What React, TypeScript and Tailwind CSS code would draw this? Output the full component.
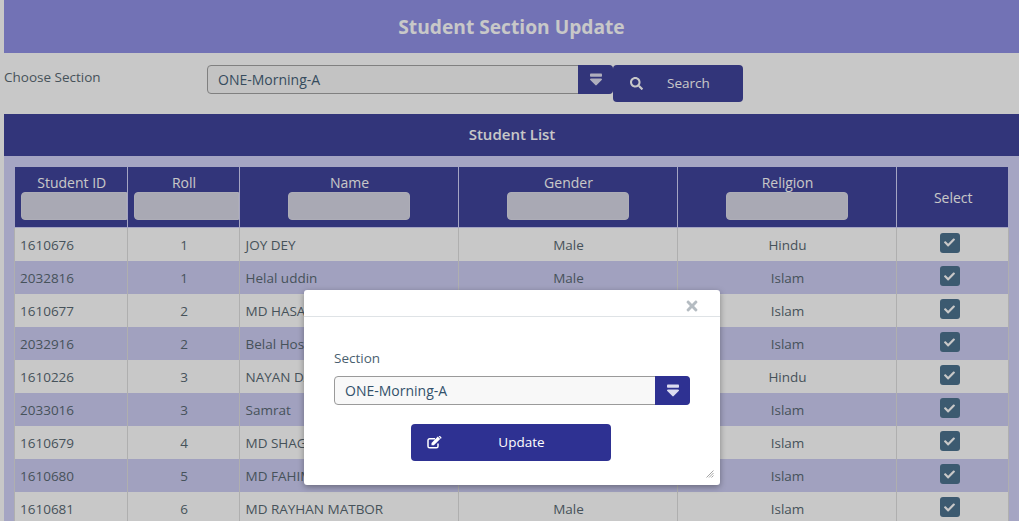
import React from "react";
import { FaCheck, FaSearch, FaTimes } from "react-icons/fa";

const students = [
  { id: "1610676", roll: 1, name: "JOY DEY", gender: "Male", religion: "Hindu" },
  { id: "2032816", roll: 1, name: "Helal uddin", gender: "Male", religion: "Islam" },
  { id: "1610677", roll: 2, name: "MD HASAN", gender: "Male", religion: "Islam" },
  { id: "2032916", roll: 2, name: "Belal Hossain", gender: "Male", religion: "Islam" },
  { id: "1610226", roll: 3, name: "NAYAN DAS", gender: "Male", religion: "Hindu" },
  { id: "2033016", roll: 3, name: "Samrat", gender: "Male", religion: "Islam" },
  { id: "1610679", roll: 4, name: "MD SHAGOR", gender: "Male", religion: "Islam" },
  { id: "1610680", roll: 5, name: "MD FAHIM", gender: "Male", religion: "Islam" },
  { id: "1610681", roll: 6, name: "MD RAYHAN MATBOR", gender: "Male", religion: "Islam" },
];

const SelectArrow = () => (
  <svg width="14" height="13" viewBox="0 0 14 13" fill="currentColor">
    <rect x="1" y="0.5" width="12" height="3.2" rx="0.8" />
    <path d="M2 5.4h10a1 1 0 0 1 .7 1.7l-5 5a1 1 0 0 1-1.4 0l-5-5A1 1 0 0 1 2 5.4z" />
  </svg>
);

const EditIcon = () => (
  <svg width="15" height="13" viewBox="0 0 15 13" fill="none">
    <path d="M11 7.5V10.2a1.6 1.6 0 0 1-1.6 1.6H2.6A1.6 1.6 0 0 1 1 10.2V4.4a1.6 1.6 0 0 1 1.6-1.6H8" stroke="currentColor" strokeWidth="1.5" />
    <path d="M4.5 9.2V6.9L10.8.6l2.4 2.4-6.3 6.2z" fill="currentColor" />
    <path d="M11.6 0l.3-.1a.8.8 0 0 1 1 0l1.4 1.4a.8.8 0 0 1 0 1l-.5.6z" fill="currentColor" />
  </svg>
);

const ResizeHandle = () => (
  <svg width="8" height="8" viewBox="0 0 8 8" stroke="#a4a4a4" strokeWidth="1">
    <path d="M0.5 7.5l7-7M3 7.5l4.5-4.5M5.5 7.5l2-2" />
  </svg>
);

const App: React.FC = () => {
  return (
    <div className="relative h-[521px] overflow-hidden bg-white pl-1 font-['Open_Sans',sans-serif] text-[13.5px] text-[#4a5a66]">
      <div className="flex h-[53px] items-center justify-center bg-[#8787e5] pt-[2px] text-[19.2px] font-bold text-white">
        Student Section Update
      </div>

      <div className="flex h-[61px]">
        <label className="mt-[15px] w-[203px] leading-[18px]">Choose Section</label>
        <div className="mt-3 flex h-[29px] w-[406px] rounded border border-[#9a9a9a] bg-[#f8f8f8] pl-[10px]">
          <span className="flex-1 text-sm leading-[27px] text-[#33516b]">ONE-Morning-A</span>
          <span className="-my-px -mr-px flex w-[35px] items-center justify-center rounded-r bg-[#2e3192] text-[#dcdcf0]">
            <SelectArrow />
          </span>
        </div>
        <button className="mt-3 flex h-[37px] w-[130px] items-center rounded bg-[#2e3192] pl-[17px] text-white">
          <FaSearch className="text-[13px]" />
          <span className="ml-[24px]">Search</span>
        </button>
      </div>

      <div className="flex h-[42px] items-center justify-center bg-[#2e3192] pb-[2px] pl-[1px] text-[15px] font-semibold text-white">
        Student List
      </div>

      <div className="h-[400px] bg-[#cfcff9] pl-[10px] pr-[10px] pt-[11px]">
        <table className="w-full table-fixed border-collapse">
          <colgroup>
            <col className="w-[112.5px]" />
            <col className="w-[112px]" />
            <col className="w-[219px]" />
            <col className="w-[219px]" />
            <col className="w-[219px]" />
            <col />
          </colgroup>
          <thead>
            <tr className="h-[60px] bg-[#2e3192] font-normal text-white">
              {["Student ID", "Roll", "Name", "Gender", "Religion"].map((title, i) => (
                <th key={title} className="overflow-hidden border border-t-0 border-[#cfcff9] p-0 align-top text-sm font-normal">
                  <div className="mt-[6px] pl-[2px] leading-[19px]">{title}</div>
                  <div className={i < 2 ? "flex justify-end pl-[7px]" : "flex justify-center"}>
                    <input
                      className={
                        i < 2
                          ? "h-[28px] w-[calc(100%+1px)] min-w-0 shrink-0 rounded-l border border-[#dadae8] bg-[#d4d4e4]"
                          : "h-[28px] w-[122px] rounded border border-[#dadae8] bg-[#d4d4e4]"
                      }
                    />
                  </div>
                </th>
              ))}
              <th className="border border-t-0 border-[#cfcff9] pl-[2px] pt-[2px] text-sm font-normal">Select</th>
            </tr>
          </thead>
          <tbody>
            {students.map((s, i) => (
              <tr key={s.id} className={i === 0 ? "h-[34px] bg-white" : i % 2 === 0 ? "h-[33px] bg-white" : "h-[33px] bg-[#c9c9f3]"}>
                <td className="border-x border-[#dcdcdc] px-[5px] pt-[2px]">{s.id}</td>
                <td className="border-x border-[#dcdcdc] pl-[2px] pt-[2px] text-center">{s.roll}</td>
                <td className="border-x border-[#dcdcdc] px-[6px] pt-[2px]">{s.name}</td>
                <td className="border-x border-[#dcdcdc] pl-[2px] pt-[2px] text-center">{s.gender}</td>
                <td className="border-x border-[#dcdcdc] pl-[2px] pt-[2px] text-center">{s.religion}</td>
                <td className="border-x border-[#dcdcdc] pb-[5px] pt-[5px] align-top">
                  <span className="ml-[43px] flex h-5 w-5 items-center justify-center rounded-[3px] bg-[#3c6584] text-white">
                    <FaCheck className="text-[11px]" />
                  </span>
                </td>
              </tr>
            ))}
          </tbody>
        </table>
      </div>

      <div className="absolute inset-0 bg-[#3f3f3f]/[0.287]" />

      <div className="absolute left-[304px] top-[290px] h-[195px] w-[416px] rounded-[3px] bg-white text-[#4a5f70] shadow-[0_2px_6px_rgba(0,0,0,0.35)]">
        <div className="flex h-[27px] items-center justify-end border-b border-[#dfe3e6] pr-[20px] pt-[5px] text-[#b5bcc2]">
          <FaTimes className="text-[16px]" />
        </div>
        <div className="px-[30px] pt-[32px]">
          <label className="block leading-[19px]">Section</label>
          <div className="mt-[8px] flex h-[29px] rounded border border-[#9a9a9a] bg-[#f8f8f8] pl-[10px]">
            <span className="flex-1 text-sm leading-[27px] text-[#33516b]">ONE-Morning-A</span>
            <span className="-my-px -mr-px flex w-[35px] items-center justify-center rounded-r bg-[#2e3192] text-[#dcdcf0]">
              <SelectArrow />
            </span>
          </div>
          <button className="relative ml-[77px] mt-[19px] flex h-[37px] w-[200px] items-center justify-center rounded bg-[#2e3192] text-white">
            <span className="absolute left-[16px] flex">
              <EditIcon />
            </span>
            <span className="ml-[21px]">Update</span>
          </button>
        </div>
        <span className="absolute bottom-[7px] right-[6px] flex">
          <ResizeHandle />
        </span>
      </div>
    </div>
  );
};

export default App;
